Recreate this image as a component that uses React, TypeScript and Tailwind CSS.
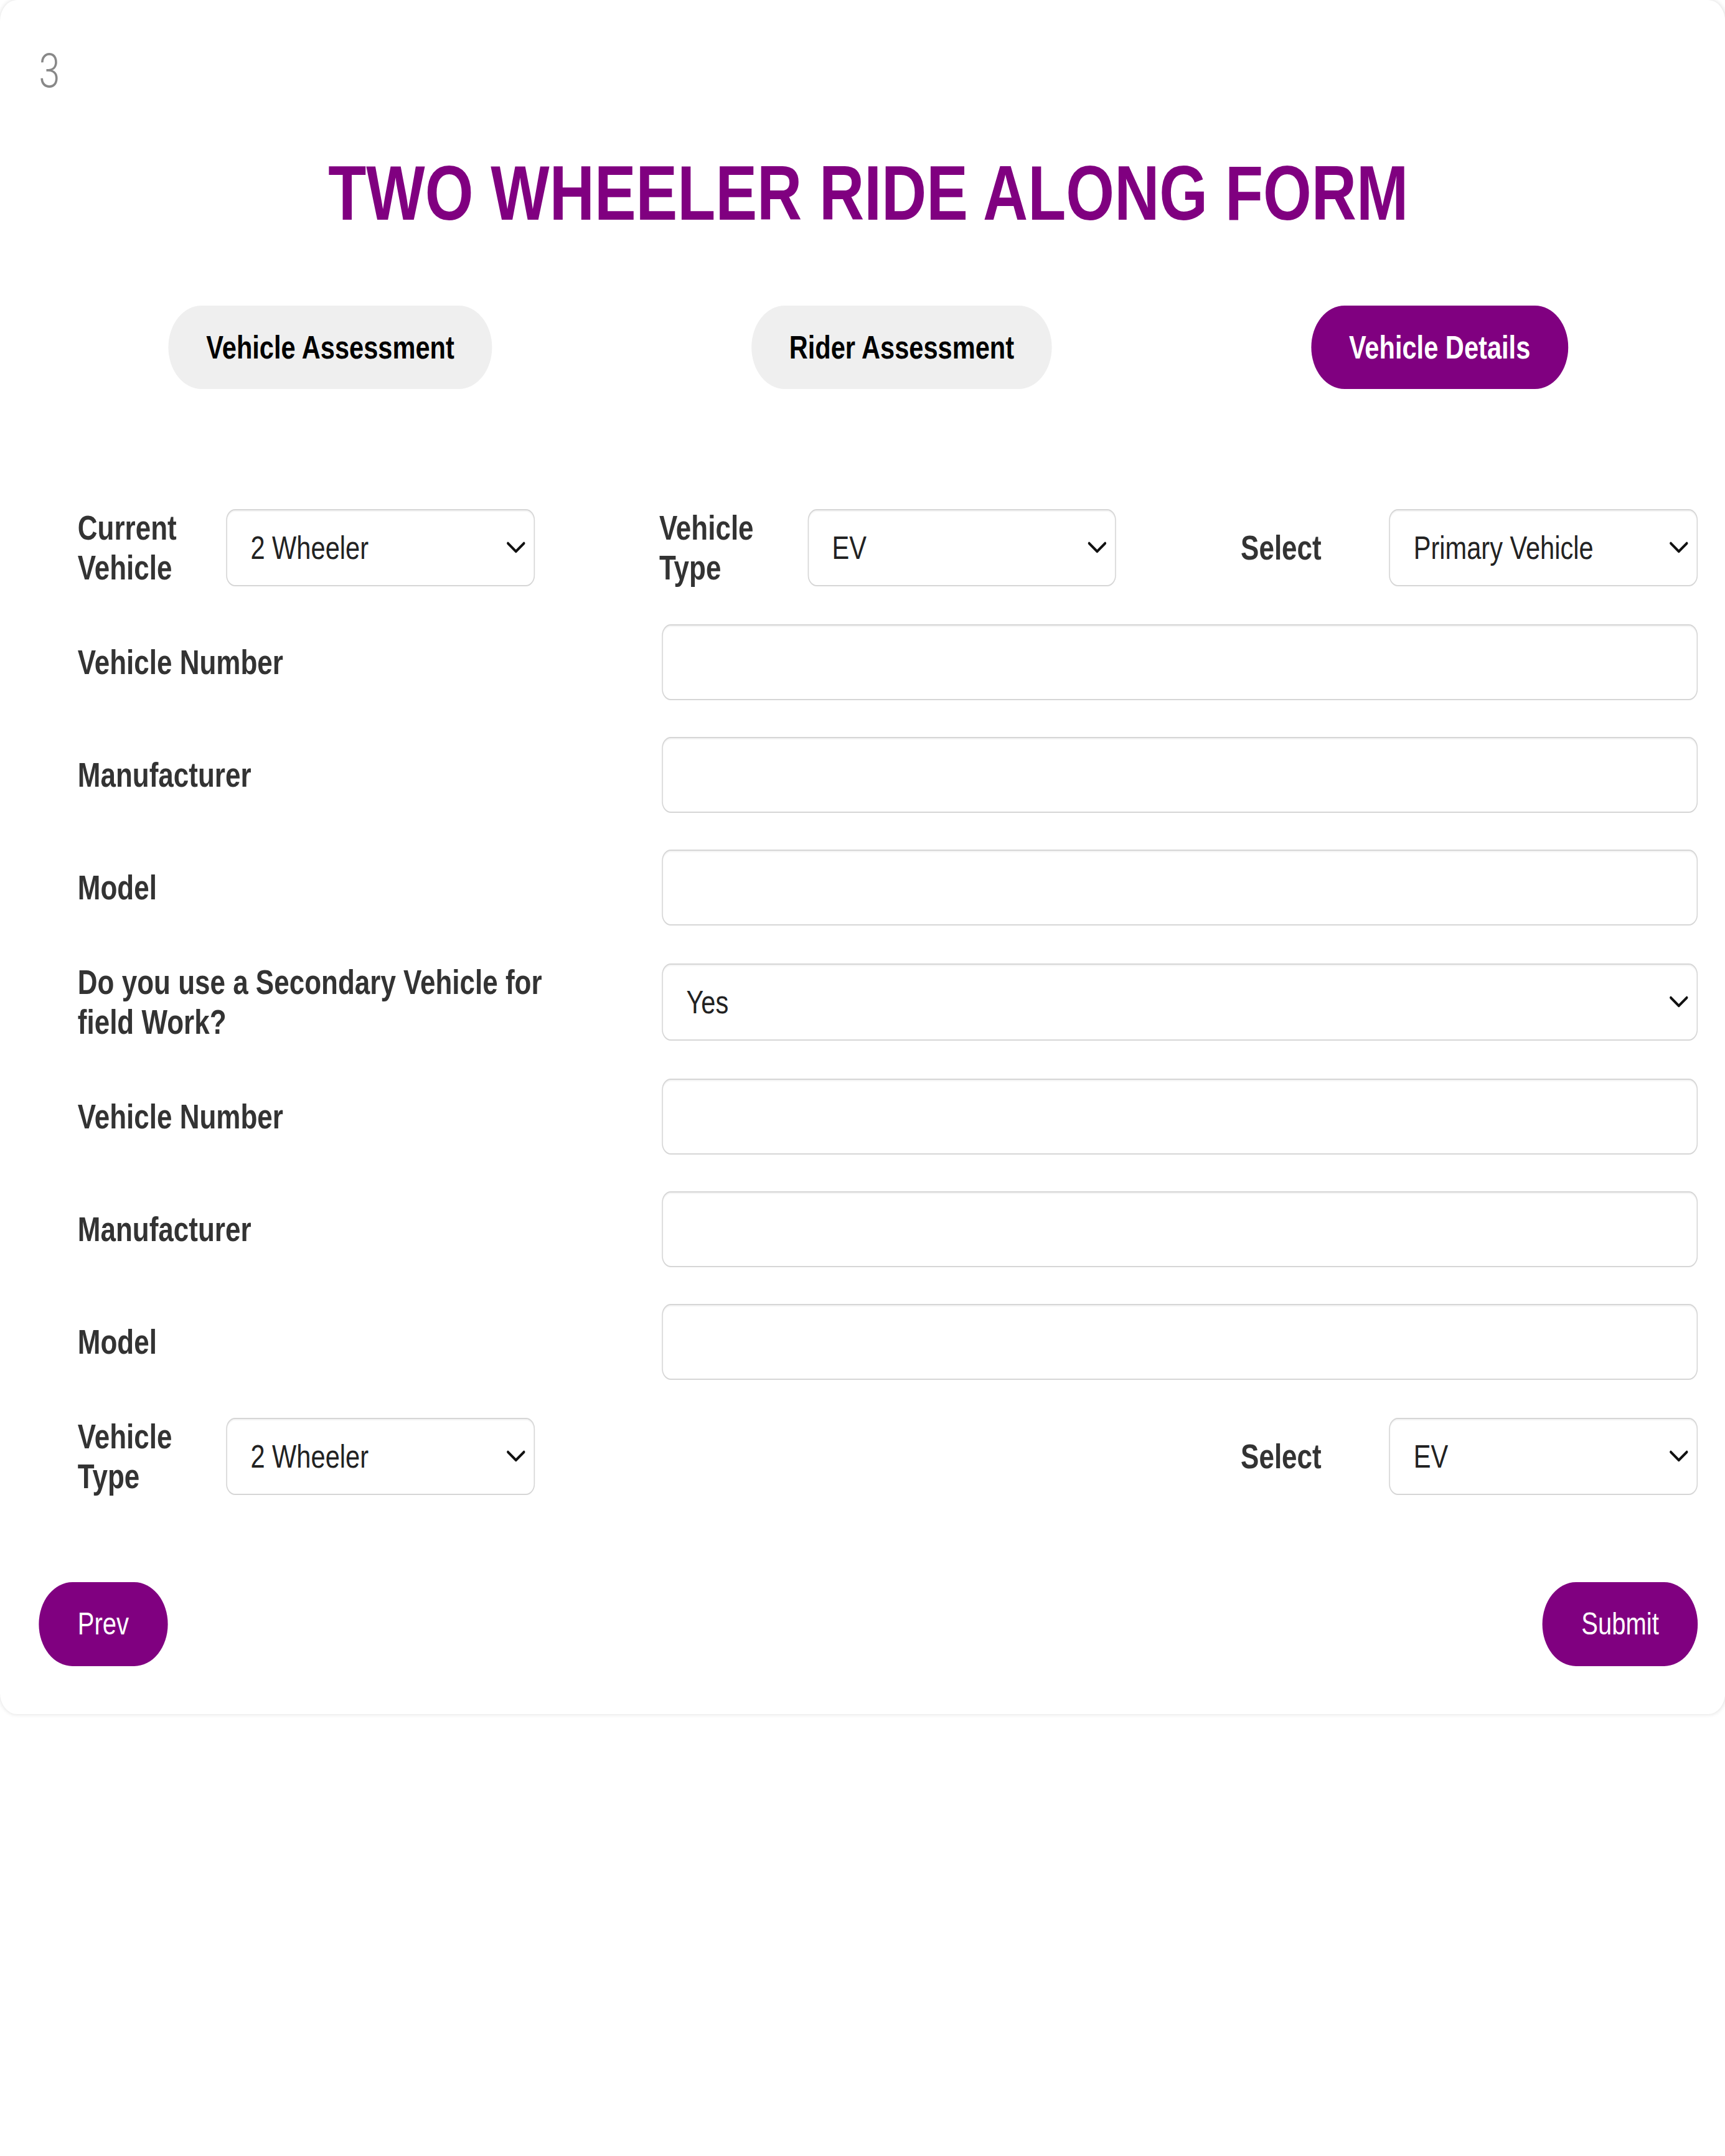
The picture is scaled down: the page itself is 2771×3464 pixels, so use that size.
import React from "react";

const FONT = "font-['Liberation_Sans',Arial,sans-serif]";

function Chevron() {
  return (
    <svg
      className="pointer-events-none absolute right-[18px] top-1/2 -translate-y-1/2"
      width="40"
      height="20"
      viewBox="0 0 40 20"
      fill="none"
    >
      <polyline points="4,3 20,16 36,3" stroke="#111" strokeWidth="4.5" strokeLinecap="round" strokeLinejoin="round" />
    </svg>
  );
}

function Select({ value, options, className = "" }: { value: string; options: string[]; className?: string }) {
  return (
    <div className={`relative ${className}`}>
      <select
        defaultValue={value}
        className={`${FONT} h-[124px] w-full appearance-none rounded-[18px] border-2 border-[#d6d6d6] bg-white pl-[47px] pr-[70px] text-[52px] text-[#222] shadow-[inset_0_2px_2px_rgba(0,0,0,0.05)] outline-none`}
      >
        {options.map((o) => (
          <option key={o}>{o}</option>
        ))}
      </select>
      <Chevron />
    </div>
  );
}

function TextInput() {
  return (
    <input
      type="text"
      className={`${FONT} h-[122px] w-full rounded-[18px] border-2 border-[#d6d6d6] bg-white px-[47px] text-[52px] text-[#222] shadow-[inset_0_2px_2px_rgba(0,0,0,0.05)] outline-none`}
    />
  );
}

function Label({ children, className = "" }: { children: React.ReactNode; className?: string }) {
  return (
    <label className={`${FONT} text-[55px] font-bold leading-[64px] text-[#333] ${className}`}>{children}</label>
  );
}

function Group({ label, value, options }: { label: string; value: string; options: string[] }) {
  return (
    <div className="flex items-center">
      <Label className="w-[298px] shrink-0">{label}</Label>
      <Select value={value} options={options} className="flex-1" />
    </div>
  );
}

function FullRow({ label, children }: { label: string; children: React.ReactNode }) {
  return (
    <div className="grid grid-cols-[1fr_2080px] items-center">
      <Label className="pr-[160px]">{label}</Label>
      {children}
    </div>
  );
}

function Tab({ label, active }: { label: string; active?: boolean }) {
  return (
    <button
      type="button"
      className={`${FONT} flex h-[134px] items-center rounded-full px-[76px] text-[52px] font-bold ${
        active ? "bg-[#800080] text-white" : "bg-[#efefef] text-black"
      }`}
    >
      {label}
    </button>
  );
}

export default function App() {
  const vehicles = ["2 Wheeler", "4 Wheeler"];
  const types = ["EV", "Petrol", "Diesel"];
  return (
    <div className="min-h-screen w-full overflow-hidden bg-white">
      <div className="w-[3464px] origin-top-left scale-x-[0.8]">
        <div className="w-full rounded-[34px] bg-white pb-[77px] pl-[78px] pr-[55px] pt-[76px] shadow-[0_0_8px_rgba(0,0,0,0.14)]">
          <div className="font-['Roboto',sans-serif] text-[76px] font-light leading-[76px] text-[#888]">3</div>

          <h1 className={`${FONT} mt-[95px] text-center text-[125px] font-bold leading-[126px] text-[#800080]`}>
            TWO WHEELER RIDE ALONG FORM
          </h1>

          <div className="mt-[118px] flex justify-around">
            <Tab label="Vehicle Assessment" />
            <Tab label="Rider Assessment" />
            <Tab label="Vehicle Details" active />
          </div>

          <form className="mt-[191px] flex flex-col gap-y-[59px] pl-[78px]">
            <div className="grid grid-cols-3 gap-x-[250px]">
              <Group label="Current Vehicle" value="2 Wheeler" options={vehicles} />
              <Group label="Vehicle Type" value="EV" options={types} />
              <Group label="Select" value="Primary Vehicle" options={["Primary Vehicle", "Secondary Vehicle"]} />
            </div>

            <FullRow label="Vehicle Number">
              <TextInput />
            </FullRow>
            <FullRow label="Manufacturer">
              <TextInput />
            </FullRow>
            <FullRow label="Model">
              <TextInput />
            </FullRow>
            <FullRow label="Do you use a Secondary Vehicle for field Work?">
              <Select value="Yes" options={["Yes", "No"]} />
            </FullRow>
            <FullRow label="Vehicle Number">
              <TextInput />
            </FullRow>
            <FullRow label="Manufacturer">
              <TextInput />
            </FullRow>
            <FullRow label="Model">
              <TextInput />
            </FullRow>

            <div className="grid grid-cols-3 gap-x-[250px]">
              <Group label="Vehicle Type" value="2 Wheeler" options={vehicles} />
              <div />
              <Group label="Select" value="EV" options={types} />
            </div>
          </form>

          <div className="mt-[138px] flex justify-between">
            <button
              type="button"
              className={`${FONT} h-[135px] rounded-full bg-[#800080] px-[78px] text-[50px] text-white`}
            >
              Prev
            </button>
            <button
              type="button"
              className={`${FONT} h-[135px] rounded-full bg-[#800080] px-[78px] text-[50px] text-white`}
            >
              Submit
            </button>
          </div>
        </div>
      </div>
    </div>
  );
}
